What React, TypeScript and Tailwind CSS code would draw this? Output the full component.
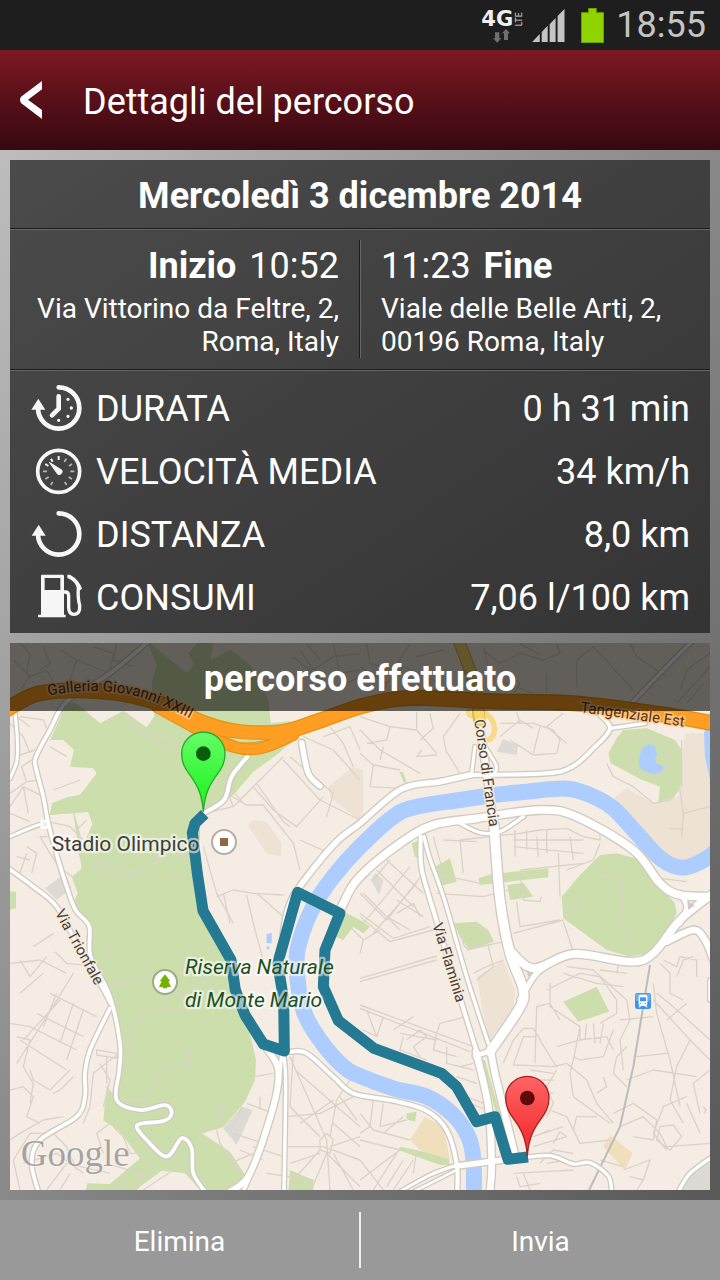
import type { ReactNode } from 'react';

type Road = { w: number; pts: number[] };

// Catmull-Rom curve through a flat list of x, y pairs
const smooth = (p: number[]) => {
  const n = p.length / 2;
  const at = (i: number) => {
    const k = Math.max(0, Math.min(n - 1, i));
    return [p[k * 2], p[k * 2 + 1]];
  };
  let d = `M${p[0]} ${p[1]}`;
  for (let i = 0; i < n - 1; i++) {
    const [a, b, c, e] = [at(i - 1), at(i), at(i + 1), at(i + 2)];
    d += `C${b[0] + (c[0] - a[0]) / 6} ${b[1] + (c[1] - a[1]) / 6} ${c[0] - (e[0] - b[0]) / 6} ${c[1] - (e[1] - b[1]) / 6} ${c[0]} ${c[1]}`;
  }
  return d;
};

const parks = [
  'M440 0L560 100L582 72L565 40L600 0L640 0L632 62L690 28L750 75L780 130L805 180L812 250L870 243L905 280L870 310L830 345L760 395L700 465L640 510L585 550L585 700L607 815L695 960L712 1070L750 1180L768 1260L765 1320L735 1385L670 1462L605 1480L690 1535L735 1605L700 1660L600 1650L555 1600L485 1592L420 1640L400 1660L255 1660L262 1630L330 1632L420 1555L355 1470L310 1442L320 1335L350 1380L360 1210L330 1070L270 950L275 870L220 790L250 720L215 490L265 670L240 640L278 552L265 515L150 525L157 490L200 472L240 465L280 425L290 400L280 385L210 380L222 330L190 300L150 300L200 190L230 190L300 250L370 212L440 262L462 230L455 130L470 75Z',
  'M215 710L265 670L240 640L278 552L600 560L600 800L270 860Z',
  'M150 525L265 515L280 560L600 600L600 440L290 400L240 465L157 490Z',
  'M1825 340L1850 295L1870 270L1940 265L2025 300L2045 330L2045 430L2020 475L1975 485L1980 440L1915 415L1880 395L1832 370Z',
  'M1685 770L1740 705L1800 645L1850 640L1905 655L1950 690L1985 745L2025 790L2030 820L1990 890L1950 940L1890 950L1820 930L1690 835Z',
  'M1690 1085L1790 1040L1828 1115L1735 1145Z',
  'M1360 850L1430 845L1465 870L1482 905L1410 930L1385 900Z',
  'M1305 680L1350 655L1370 725L1320 738Z',
  'M1435 715L1475 702L1645 685L1645 712L1440 735Z',
  'M1522 735L1570 728L1600 770L1530 780Z',
  'M1040 820L1080 840L1110 860L1090 880L1060 860L1030 900L1005 890Z',
  'M1200 1520L1345 1550L1350 1575L1320 1575L1195 1530Z',
  'M1220 1420L1250 1415L1245 1445L1220 1438Z',
  'M1235 610L1260 600L1260 660L1245 650Z',
  'M1198 395L1208 395L1220 425L1212 428Z',
  'M1445 1260L1455 1260L1505 1440L1495 1445Z',
  'M870 1590L940 1620L940 1660L865 1660Z',
  'M30 755L48 755L48 805L30 810Z',
];

const sands = [
  'M985 440L1060 380L1090 390L1090 550L1040 510L990 470Z',
  'M1835 480L1880 445L1960 490L2035 470L2055 280L2110 280L2130 420L2130 640L2030 670L1950 620Z',
  'M1430 1010L1510 960L1545 1050L1540 1110L1465 1205Z',
  'M745 560Q750 530 800 545L845 610L843 650L800 640Z',
];

const golds = [
  'M1230 1500L1275 1430L1330 1460L1350 1560L1260 1530Z',
  'M1810 1520L1830 1485L1898 1540L1875 1590Z',
];

const greys = [
  'M135 745L195 700L215 745L170 780Z',
  'M670 1465L725 1400L758 1410L710 1515Z',
  'M1490 335L1510 298L1555 315L1550 345Z',
  'M1112 720L1125 700L1150 720L1138 765Z',
  'M2040 1660L2070 1600L2140 1550L2140 1660Z',
];

// small streets, one polyline each
const streets = [
  // north west
  'M40 60L90 110L140 90L170 140M90 110L60 150M180 30L230 60L210 120L270 140M230 60L330 100M280 20L340 40L330 90M60 10L90 40L80 100M350 10L340 60L400 80M130 20L150 70L120 90',
  'M30 250L70 290L90 340M60 230L130 240L150 290M30 460L80 425L115 420M30 500L70 440L130 470M80 425L65 380L110 350M70 440L85 520M30 520L90 545M50 230L90 260M60 345L105 330',
  'M145 545L210 560L250 600M175 640L230 600L240 650M150 590L120 590L150 640L190 700M80 620L110 640L95 700M50 650L90 660M60 700L80 640M190 690L230 720M200 350L150 320M240 420L160 450M260 540L230 570',
  'M480 660L420 700L290 660L285 690L320 700L400 710M440 660L490 645L580 650M380 220L400 265L520 300M440 290L530 340M500 715L560 705M610 390L680 450L700 500',
  'M610 520L700 500L760 440L850 350M680 460L740 495L790 495L880 610L900 690M760 440L820 510L890 560L970 470M770 430L850 545L870 560M850 360L960 480L1080 540M870 350L1000 460L980 530M730 490L705 460M910 290L1000 330L1080 420M970 290L1050 260L1080 330M990 260L1030 310L1060 380',
  'M610 620L650 760L700 850M650 770L700 750L760 760L850 765M670 760L690 850M740 765L760 850L800 1000M770 760L850 830M900 600L990 640',
  // north east
  'M900 30L940 90L1000 50L1080 40M920 10L960 60M1000 10L1020 100L1080 90M880 50L1000 150L1080 110M1100 10L1110 70L1180 90L1230 10M1160 130L1210 80L1320 130M1080 80L1160 130L1150 160M1250 50L1330 30M1450 30L1500 70L1560 40L1630 60L1680 40L1670 10M1560 10L1620 45M1500 90L1560 130L1540 160M1640 100L1640 160M1730 140L1730 60L1780 20L1900 150M1890 10L1910 50L2000 110M2040 150L2060 90L2130 40M2030 190L2130 80M2060 190L2110 130M1450 20L1470 110L1600 160',
  'M1080 270L1140 330L1260 400M1080 230L1170 260L1160 300L1100 310M1170 260L1250 270L1310 340M1140 360L1150 320M1120 375L1200 390M1250 270L1250 215M1310 345L1250 350L1265 330M1340 335L1380 400M1260 300L1300 265L1290 220M1080 340L1120 375L1110 440L1200 445M1380 220L1330 290L1340 340',
  'M1500 250L1600 250L1660 270L1680 300L1670 340L1600 345L1530 300M1500 290L1560 240L1600 265M1560 250L1550 215M1620 260L1600 340M1700 310L1640 260L1690 220',
  'M1820 370L1840 410L1900 440L1960 490L2010 480L2045 440L2045 300M1880 300L1930 285L2000 310L2010 380L1960 415L1890 390ZM2040 450L2050 520L2130 500M2050 520L2045 590M2010 565L2050 568M1980 715L2060 725',
  'M1380 600L1560 580L1620 570L1700 565L1750 590L1800 600L1800 570M1540 600L1750 600M1540 620L1750 640M1545 570L1545 650M1580 570L1580 630M1610 590L1615 650M1640 570L1640 640M1675 640L1680 770M1710 590L1720 660M1560 690L1750 670M1800 610L1780 660L1700 690M1300 700L1440 730M1300 590L1330 700M1380 600L1390 700M1330 600L1430 605M1310 760L1450 770L1560 740M1560 700L1570 780L1620 785L1625 770',
  'M1830 715L1800 710L1870 690L1870 710L1860 830L1890 930',
  'M1080 760L1160 840L1270 700M1090 850L1230 680M1120 880L1250 730M1130 690L1240 800M1160 660L1270 760M1090 760L1200 870M1120 720L1170 660M1050 860L1090 900L1140 870M1190 780L1270 830M1080 730L1110 700',
  // south west
  'M30 970L120 960L200 1000M60 960L90 1010L140 950M100 920L160 880M165 935L200 970L300 980M60 1060L130 1000M50 1270L140 1130L220 1000M70 1200L180 1080M150 1060L290 1130M110 1120L250 1190M90 1160L230 1230M60 1200L200 1290M170 1060L130 1160M220 1090L180 1210M250 1110L200 1260M90 1290L100 1320L150 1350L210 1290M50 1190L90 1200L70 1280L100 1330L90 1390M30 1350L70 1340L100 1370L80 1430L120 1450M30 1150L90 1160',
  'M290 1245L350 1255L350 1240L290 1230ZM320 1250L320 1330M350 1245L280 1300L270 1400L250 1450M220 1310L180 1350L160 1360M300 1270L330 1320L310 1400M30 1500L60 1480L130 1440L190 1430M40 1560L90 1480L160 1480L200 1520L230 1590M60 1650L40 1560M70 1570L170 1540L250 1600M140 1650L200 1570L330 1600M180 1650L210 1600M330 1450L290 1480L310 1540M340 1460L370 1490L390 1540L450 1540L450 1590L400 1610M320 1570L420 1600L430 1620M360 1650L370 1600L390 1650M430 1650L520 1590L560 1560',
  'M330 1035L450 1010L440 960M400 1150L380 1165L400 1220L395 1260L370 1270M400 1150L450 1120L560 1100M350 1380L435 1380L450 1330L510 1270L568 1275L565 1230M530 1045L545 1080L620 1010M620 1010L640 1050M310 920L330 935L320 960M650 1450L660 1390L670 1430M650 1470L660 1510L720 1600M610 1480L650 1450',
  'M760 1310L820 1300M780 1370L780 1410M740 1390L820 1420M700 1480L790 1510M725 1400L700 1460M720 1530L790 1560M690 1570L760 1540M800 1600L940 1620M760 1520L850 1550',
  'M870 1250L980 1500L990 1650M885 1290L1080 1460M880 1240L870 1400L960 1490M860 1430L960 1420L1080 1360M860 1520L970 1520L1080 1560M870 1570L960 1540M990 1520L1080 1490M990 1490L1010 1380L1050 1320M930 1660L980 1540L1080 1640M1000 1540L1060 1650M900 1450L1000 1380M880 1620L960 1530M1000 1450L1080 1520M1020 1370L1070 1440',
  'M960 1500L980 1480L1000 1500L990 1540L960 1530Z',
  // south centre
  'M1080 1420L1120 1470L1230 1500M1120 1380L1110 1460L1080 1480M1150 1390L1140 1460L1220 1440M1080 1500L1200 1530L1080 1620M1190 1540L1120 1650M1080 1560L1150 1650M1210 1560L1160 1640M1240 1560L1180 1650M1150 1480L1210 1430M1250 1530L1240 1600',
  'M1080 1095L1420 1220M1080 1105L1410 1235M1100 1110L1130 1190M1150 1130L1130 1190L1090 1170M1220 1200L1260 1170L1280 1190L1240 1220L1260 1250M1210 1190L1200 1230L1280 1260M1310 1180L1320 1150L1400 1130M1310 1180L1300 1230L1370 1250M1340 1220L1340 1270L1420 1290M1200 1180L1310 1200M1380 1280L1420 1270M1370 1310L1430 1330M1400 1370L1450 1390M1410 1390L1460 1410M1240 1130L1180 1170',
  'M1080 1025L1310 960M1080 1015L1310 948M1080 820L1180 895L1290 860M1080 830L1170 905L1300 870M1160 830L1230 870M1190 820L1240 790L1260 830M1090 900L1080 940M1400 870Q1420 840 1450 870T1430 920T1390 880M1420 1000L1460 980L1510 960M1430 1020L1480 980L1460 900M1400 930L1510 905M1540 880L1690 840M1690 845L1720 935M1550 785L1560 860L1680 840M1750 780L1690 830M1420 1060L1430 1120',
  // south east
  'M1510 1270L1540 1200L1570 1165L1600 1165L1650 1250L1670 1280L1540 1275L1570 1190L1610 1190M1605 1270L1610 1100L1650 1090L1680 1140M1650 1030L1650 1100L1740 1160L1720 1260L1710 1300M1640 1050L1740 1000L1800 1010L1850 1080L1850 1120L1800 1150M1690 1000L1790 1030L1870 1040M1740 1160L1740 1200L1670 1220M1760 1150L1755 1200M1780 1150L1785 1210M1810 1150L1800 1210M1740 1200L1820 1190L1840 1230M1840 1170L1810 1250L1740 1260L1720 1250',
  'M1660 1280L1700 1270L1760 1320L1790 1390L1840 1450M1710 1300L1720 1370L1830 1450M1670 1290L1640 1340L1660 1390L1640 1430M1590 1290L1660 1300M1550 1310L1570 1430L1590 1490M1660 1320L1600 1320M1790 1360L1820 1340L1810 1310M1600 1340L1660 1360M1650 1410L1700 1430L1740 1510L1830 1500M1650 1470L1600 1490L1690 1460M1720 1470L1730 1430L1790 1430M1660 1510L1680 1475L1700 1490',
  'M1700 980L1780 990L1880 1080L1890 1140L1860 1200L1870 1290M1960 1030L1970 1120L2010 1260L2040 1400M1970 1060L2020 1100L2130 1200M1960 1080L2080 1210L2130 1260M1980 970L2010 1000L2010 1060L2050 1080M1990 960L2030 980L2040 950L2090 960L2090 1010M2030 1010L2050 960L2080 950M2000 1140L2060 1090M1860 1140L1960 1130M1910 1250L2000 1240M1880 1320L1960 1290L2090 1310M2070 1200L2030 1280L2010 1380L2050 1450M2130 1290L2080 1330L2100 1420M2110 1400L2118 1410L2112 1420',
  'M1860 1460L1930 1430L1980 1480L2000 1520L2130 1510M1840 1420L1900 1390L1970 1440L1960 1500L1900 1490M1980 1460L2020 1455L2045 1490L2010 1530L1970 1500ZM1870 1590L1950 1560L1930 1620L1890 1610M1930 1620L1910 1650M1800 1560L1870 1580M1540 1600L1720 1590M1570 1600L1590 1650M1550 1610L1560 1640L1620 1630M1620 1570L1660 1530L1720 1540M1600 1520L1700 1490M1640 1570L1700 1560M1800 990L1880 1000M1850 1000L1860 960',
  'M1880 1220L1850 1250L1840 1300L1880 1340M2000 1530L1960 1480L1990 1400L2060 1370M2060 1390L2100 1480',
];

const roads: Road[] = [
  { w: 9, pts: [45, 215, 52, 300, 50, 365, 30, 415] },
  { w: 9, pts: [30, 590, 80, 568, 130, 550] },
  { w: 11, pts: [445, 5, 330, 100, 200, 185, 150, 270, 108, 350, 108, 385, 130, 470, 145, 550, 175, 660, 210, 770, 230, 815, 268, 860, 272, 950, 330, 1070, 360, 1210, 358, 1290, 350, 1380, 420, 1410, 495, 1395, 515, 1420, 490, 1443, 412, 1455, 440, 1500, 500, 1550, 545, 1495, 575, 1525, 580, 1600, 615, 1655] },
  { w: 11, pts: [25, 685, 100, 740, 170, 800, 230, 910, 300, 1030, 332, 1090] },
  { w: 11, pts: [330, 1105, 270, 1230, 255, 1300, 255, 1370, 230, 1430, 120, 1500, 95, 1570, 115, 1655] },
  { w: 12, pts: [742, 350, 695, 410, 672, 480, 610, 520] },
  { w: 16, pts: [905, 308, 925, 400, 960, 438] },
  { w: 12, pts: [870, 1235, 920, 1240, 1000, 1310, 1060, 1360, 1180, 1382, 1280, 1412, 1340, 1470, 1370, 1570, 1372, 1655] },
  { w: 10, pts: [850, 1240, 857, 1330, 852, 1655] },
  { w: 18, pts: [800, 1225, 835, 1290, 820, 1400, 750, 1600, 690, 1655] },
  { w: 10, pts: [845, 1240, 832, 1350, 790, 1510, 730, 1655] },
  { w: 17, pts: [850, 880, 880, 770, 1000, 615, 1080, 550, 1205, 447, 1320, 425, 1410, 405] },
  { w: 12, pts: [1410, 405, 1640, 400, 1720, 378, 1780, 325, 1830, 265, 1790, 215] },
  { w: 10, pts: [1830, 265, 1880, 258, 1935, 250] },
  { w: 10, pts: [2075, 5, 1990, 90, 1890, 195] },
  { w: 23, pts: [980, 920, 1030, 790, 1080, 710, 1200, 610, 1300, 555, 1430, 535, 1620, 510, 1730, 530, 1900, 630, 1980, 730, 2040, 765, 2140, 770] },
  { w: 10, pts: [1380, 550, 1440, 578, 1500, 575, 1570, 530] },
  { w: 9, pts: [1425, 320, 1415, 400] },
  { w: 9, pts: [1455, 320, 1488, 375, 1485, 400] },
  { w: 20, pts: [1437, 240, 1460, 400, 1483, 560] },
  { w: 28, pts: [1482, 555, 1500, 780, 1530, 940, 1570, 1050, 1555, 1110, 1470, 1235] },
  { w: 23, pts: [1530, 930, 1600, 985, 1720, 942, 1890, 965, 1960, 940, 2040, 840, 2140, 760] },
  { w: 16, pts: [1560, 1080, 1610, 1000, 1680, 955] },
  { w: 20, pts: [2000, 905, 2080, 870, 2115, 900, 2140, 960] },
  { w: 14, pts: [2040, 850, 2060, 800, 2040, 760] },
  { w: 10, pts: [2130, 1020, 2130, 1080] },
  { w: 12, pts: [1262, 590, 1264, 680, 1292, 785, 1430, 1235] },
  { w: 10, pts: [1272, 590, 1288, 650, 1335, 785, 1400, 1010, 1465, 1210] },
  { w: 20, pts: [1428, 1235, 1465, 1400, 1475, 1570, 1470, 1655] },
  { w: 20, pts: [1472, 1225, 1485, 1300, 1545, 1545] },
  { w: 14, pts: [1425, 1248, 1475, 1232] },
  { w: 17, pts: [1370, 1578, 1470, 1565, 1550, 1555] },
  { w: 10, pts: [1550, 1555, 1650, 1547, 1720, 1572, 1770, 1568, 1825, 1608, 1835, 1655] },
  { w: 9, pts: [1200, 1655, 1290, 1605, 1370, 1575] },
  { w: 7, pts: [1240, 1655, 1370, 1590] },
  { w: 10, pts: [2140, 1548, 2070, 1600, 2035, 1655] },
];

const river = [
  2160, 620, 2120, 655, 2050, 683, 1985, 658, 1910, 580, 1840, 505, 1770, 465, 1700, 446, 1580, 455, 1480, 465, 1380, 480,
  1250, 500, 1180, 530, 1080, 620, 1000, 710, 940, 800, 900, 900, 890, 980, 910, 1110, 960, 1200, 1030, 1280, 1080, 1308,
  1180, 1345, 1280, 1370, 1360, 1425, 1405, 1490, 1420, 1555, 1422, 1660,
];

const motorway = [20, 208, 100, 165, 180, 152, 300, 154, 400, 168, 500, 198, 600, 245, 690, 272, 780, 280, 860, 274, 950, 245, 1080, 200, 1180, 178, 1280, 174, 1480, 184, 1720, 190, 1980, 222, 2140, 250];
const motorwayRamp = [470, 200, 560, 250, 640, 295, 700, 320, 750, 328, 800, 320, 880, 285];

const route = 'M614 522L585 550L577 578L592 700L609 812L693 960L706 1050L735 1125L790 1212L853 1233L851 1080L833 970L893 757L1020 820L975 930L970 1040L1015 1142L1122 1225L1325 1300L1370 1340L1430 1445L1485 1430L1524 1558L1584 1551';

const halo = { paintOrder: 'stroke', strokeLinejoin: 'round' } as const;

const Pin = ({ x, y, id, top, bottom, edge, dot }: { x: number; y: number; id: string; top: string; bottom: string; edge: string; dot: string }) => (
  <g transform={`translate(${x} ${y})`}>
    <defs>
      <linearGradient id={id} x1="0" y1="0" x2="0" y2="1">
        <stop offset="0" stopColor={top} />
        <stop offset="0.75" stopColor={bottom} />
      </linearGradient>
    </defs>
    <path d="M0 -2C-8 -110 -65 -110 -65 -175A65 65 0 0 1 65 -175C65 -110 8 -110 0 -2Z" fill={`url(#${id})`} stroke={edge} strokeWidth="4" strokeLinejoin="round" />
    <circle cy="-175" r="22" fill={dot} />
  </g>
);

const RouteMap = () => (
  <svg viewBox="30 9 2100 1641" className="block h-auto w-full font-[Roboto,sans-serif]" role="img" aria-label="Mappa del percorso">
    <rect x="30" y="9" width="2100" height="1641" fill="#f5ede4" />
    <g fill="#eee2d5">{sands.map((d) => <path key={d} d={d} />)}</g>
    <g fill="#cddead">{parks.map((d) => <path key={d} d={d} />)}</g>
    <g fill="#f0dfbc">{golds.map((d) => <path key={d} d={d} />)}</g>
    <g fill="#dddad5">{greys.map((d) => <path key={d} d={d} />)}</g>
    <g fill="#aecdff">
      <path d="M1925 325L1945 312L1965 318L1972 345L1965 355L1970 370L1990 378L1985 400L1960 402L1940 395L1920 385L1915 365Z" />
      <path d="M2112 280L2130 215L2130 420L2115 350Z" />
      <path d="M800 882L815 878L815 910L800 910ZM800 920L808 918L808 928L800 928Z" />
    </g>
    <g fill="none" stroke="#dbd3c8" strokeWidth="4" strokeLinejoin="round">
      {streets.map((d) => <path key={d} d={d} />)}
    </g>
    <path d={smooth(river)} fill="none" stroke="#aecdff" strokeWidth="48" />
    <path d="M1950 975L1900 1280L1860 1460L1765 1655" fill="none" stroke="#bdbbbb" strokeWidth="6" />
    <g fill="none" strokeLinecap="round" strokeLinejoin="round">
      <g stroke="#d2cac0">{roads.map((r) => <path key={r.pts.join()} d={smooth(r.pts)} strokeWidth={r.w + 8} />)}</g>
      <g stroke="#fff">{roads.map((r) => <path key={r.pts.join()} d={smooth(r.pts)} strokeWidth={r.w} />)}</g>
      <rect x="125" y="543" width="20" height="20" fill="#f5ede4" stroke="#fff" strokeWidth="7" />
      <path d="M1578 990L1600 1000L1585 1010ZM2062 785L2085 795L2065 810Z" fill="#d2cac0" />
      <path d="M1405 215Q1405 230 1430 228M1450 215Q1490 240 1482 280Q1475 305 1450 300" stroke="#f8d98a" strokeWidth="16" />
      <path d="M1372 -10L1425 130L1438 240" stroke="#e0b347" strokeWidth="38" />
      <path d="M1372 -10L1425 130L1440 240" stroke="#fbd86b" strokeWidth="30" />
      <g stroke="#e8930f">
        <path d={smooth(motorwayRamp)} strokeWidth="36" />
        <path d={smooth(motorway)} strokeWidth="48" />
      </g>
      <g stroke="#ff9e22">
        <path d={smooth(motorwayRamp)} strokeWidth="29" />
        <path d={smooth(motorway)} strokeWidth="40" />
      </g>
      <path d="M672 290Q740 300 810 298Q760 312 720 308Z" fill="#cddead" stroke="#e8930f" strokeWidth="3" />
    </g>
    <path d={route} fill="none" stroke="#247a93" strokeWidth="33" strokeLinejoin="round" />

    <path id="galleria" d="M145 167Q310 135 440 178Q510 202 600 252" fill="none" />
    <g stroke="#f6ecdf" strokeOpacity="0.75" strokeWidth="10" fill="#4a4038" fontSize="45" style={halo}>
      <text fill="#5b3410" stroke="#ffcf94">
        <textPath href="#galleria">Galleria Giovanni XXIII</textPath>
      </text>
      <text transform="translate(1740 216) rotate(8)" fill="#5b3410" stroke="#ffcf94">Tangenziale Est</text>
      <text transform="translate(1423 240) rotate(82)">Corso di Francia</text>
      <text transform="translate(1297 854) rotate(73)">Via Flaminia</text>
      <text transform="translate(164 818) rotate(61)">Via Trionfale</text>
    </g>
    <g stroke="#fff" strokeOpacity="0.55" strokeWidth="14" style={halo}>
      <text x="155" y="632" fontSize="63" fill="#443c3c">Stadio Olimpico</text>
      <g fontSize="63" fontStyle="italic" fill="#1f4f1f">
        <text x="555" y="1003">Riserva Naturale</text>
        <text x="555" y="1102">di Monte Mario</text>
      </g>
    </g>

    <g fill="#fff" stroke="#b5aea8" strokeWidth="6">
      <circle cx="672" cy="606" r="36" />
      <circle cx="495" cy="1026" r="36" stroke="#9bab82" />
    </g>
    <rect x="660" y="594" width="24" height="24" fill="#8f6745" />
    <path d="M495 1003L511 1024H505L513 1041H501V1045H489V1041H477L485 1024H479Z" fill="#72b100" />
    <g transform="translate(1905 1059)">
      <rect width="48" height="48" rx="7" fill="#3f95e8" />
      <rect x="2" y="2" width="44" height="22" rx="6" fill="#6bb2f3" />
      <path d="M17 5H31Q37 5 37 11V33Q37 36 34 37L38 43H33L30 39H18L15 43H10L14 37Q11 36 11 33V11Q11 5 17 5Z" fill="#fff" />
      <rect x="15" y="13" width="18" height="12" rx="2" fill="#3f95e8" />
      <circle cx="17" cy="31" r="2" fill="#3f95e8" />
      <circle cx="31" cy="31" r="2" fill="#3f95e8" />
    </g>

    <Pin x={610} y={516} id="pin-start" top="#66fc68" bottom="#2cf52c" edge="#26ac2c" dot="#0b5c10" />
    <Pin x={1582} y={1549} id="pin-end" top="#ff6466" bottom="#f53434" edge="#a82024" dot="#5e0a0c" />

    <text x="62" y="1579" fontSize="111" fontFamily="Liberation Serif, serif" fill="#8e8a86" fillOpacity="0.75" stroke="#fff" strokeOpacity="0.4" strokeWidth="6" style={halo}>
      Google
    </text>
  </svg>
);

const StatIcon = ({ children }: { children: ReactNode }) => (
  <svg viewBox="-86 -72 156 144" className="h-12 w-[52px] shrink-0" fill="none" stroke="#f7f7f7" aria-hidden="true">
    {children}
  </svg>
);

const stats = [
  {
    label: 'DURATA',
    value: '0 h 31 min',
    icon: (
      <StatIcon>
        <path d="M0 -65A62 62 0 1 1 -62 -3" strokeWidth="14" strokeLinecap="round" />
        <path d="M-82 2L-61 -31L-40 2Z" fill="#f7f7f7" stroke="none" />
        <path d="M0 -38V-1L-20 19" strokeWidth="14" strokeLinecap="round" strokeLinejoin="round" />
        <path d="M28 -29v0M38 -3v0M28 22v0M0 34v0" strokeWidth="10" strokeLinecap="round" />
      </StatIcon>
    ),
  },
  {
    label: 'VELOCITÀ MEDIA',
    value: '34 km/h',
    icon: (
      <StatIcon>
        <circle cy="-2" r="63" strokeWidth="11" />
        <path d="M0 -48V-36M-23 -40L-18 -31M-40 -24L-31 -18" strokeWidth="6" />
        <path d="M-47 -2H-35M-40 21L-30 15M-24 39L-18 30M23 -40L17 -30M40 -24L31 -18M47 -2H35M40 21L30 15M24 39L18 30" stroke="#b5b5b5" strokeWidth="5" />
        <path d="M-28 -29L10 -5Q12 7 0 8Q-5 6 -7 1Z" fill="#f7f7f7" stroke="#f7f7f7" strokeWidth="3" />
      </StatIcon>
    ),
  },
  {
    label: 'DISTANZA',
    value: '8,0 km',
    icon: (
      <StatIcon>
        <path d="M0 -65A62 62 0 1 1 -62 -3" strokeWidth="14" strokeLinecap="round" />
        <path d="M-81 2L-60 -31L-39 2Z" fill="#f7f7f7" stroke="none" />
      </StatIcon>
    ),
  },
  {
    label: 'CONSUMI',
    value: '7,06 l/100 km',
    icon: (
      <StatIcon>
        <path d="M-53 -66Q-53 -70 -49 -70H12Q16 -70 16 -66V50H21V58H-62V50H-53ZM-42 -60V-24H5V-60Z" fill="#f7f7f7" fillRule="evenodd" stroke="none" />
        <path d="M16 -18H20Q30 -18 30 -6V28Q30 49 46 49Q65 49 63 22Q57 2 59 -32" strokeWidth="10" />
        <path d="M26 -70L34 -70Q62 -54 70 -28L62 -22L54 -32Q50 -50 26 -60Z" fill="#f7f7f7" stroke="none" />
      </StatIcon>
    ),
  },
];

const StatusBar = () => (
  <div className="flex h-[50px] items-center justify-end bg-[#1e1e1e] pr-[14px]">
    <svg viewBox="0 0 138 105" className="h-[35px] w-[46px]" aria-hidden="true">
      <text x="-2" y="54" fontSize="63" fontWeight="700" fontFamily="DejaVu Sans, sans-serif" fill="#eee">4G</text>
      <text transform="translate(121 55) rotate(-90)" fontSize="27" fontFamily="Roboto, sans-serif" fill="#ddd">LTE</text>
      <path d="M39 73H52V91H58L46 104L33 91H39ZM66 96H78V76H84L72 63L60 76H66Z" fill="#6e6e6e" />
    </svg>
    <svg viewBox="226 29 99 100" className="ml-1 h-[33px] w-[33px]" fill="#c4c4c4" aria-hidden="true">
      <path d="M226 129L249 105V129ZM255 99L273 80V129H255ZM279 75L297 56V129H279ZM303 50L324 29V129H303Z" />
    </svg>
    <svg viewBox="372 24 69 105" className="ml-4 h-[35px] w-[23px]" aria-hidden="true">
      <path d="M373 38H395V25H418V38H440V128H373Z" fill="#8fd400" stroke="#6ba300" strokeWidth="3" />
    </svg>
    <span className="ml-3 text-[36px] leading-[48px] text-[#c4c4c4]">18:55</span>
  </div>
);

const rule = 'border-b border-[#1c1c1c] shadow-[0_1px_0_#666]';

export default function App() {
  return (
    <div className="flex min-h-screen flex-col bg-[#999] font-[Roboto,sans-serif] text-white">
      <StatusBar />
      <header className="flex h-[100px] items-center bg-linear-to-b from-[#7c1823] to-[#37080f]">
        <button type="button" aria-label="Indietro" className="flex h-full w-[83px] items-center pl-5">
          <svg viewBox="0 0 66 114" className="h-[38px] w-[22px]" fill="#fff">
            <path d="M66 0V25L24 56L66 87V114L3 66Q-3 56 3 47Z" />
          </svg>
        </button>
        <h1 className="pt-1 text-[36px] leading-[48px]">Dettagli del percorso</h1>
      </header>

      <main className="flex flex-1 flex-col gap-[10px] bg-linear-to-br from-[#bdbdbd] to-[#585858] p-[10px]">
        <section className="bg-linear-to-br from-[#4b4b4b] to-[#343434]">
          <h2 className={`pt-3 pb-2 text-center text-[36px] leading-[48px] font-bold ${rule}`}>Mercoledì 3 dicembre 2014</h2>
          <div className={`grid grid-cols-2 py-[11px] ${rule}`}>
            <div className="border-r border-[#1c1c1c] pt-[6px] pr-5 pl-5 text-right">
              <p className="text-[36px] leading-[40px]"><b>Inizio</b> <span className="ml-1">10:52</span></p>
              <p className="mt-[6px] text-[28px] leading-[33px]">Via Vittorino da Feltre, 2,<br />Roma, Italy</p>
            </div>
            <div className="border-l border-[#666] pt-[6px] pr-5 pl-5">
              <p className="text-[36px] leading-[40px]"><span className="mr-1">11:23</span> <b>Fine</b></p>
              <p className="mt-[6px] text-[28px] leading-[33px]">Viale delle Belle Arti, 2,<br />00196 Roma, Italy</p>
            </div>
          </div>
          <dl className="pt-[7px] pr-5 pb-1 pl-5">
            {stats.map((s) => (
              <div key={s.label} className="flex h-[63px] items-center text-[36px] leading-[48px]">
                {s.icon}
                <dt className="ml-[14px] flex-1">{s.label}</dt>
                <dd>{s.value}</dd>
              </div>
            ))}
          </dl>
        </section>

        <section className="relative">
          <RouteMap />
          <h2 className="absolute inset-x-0 top-0 bg-black/60 pt-3 pb-2 text-center text-[36px] leading-[48px] font-bold">percorso effettuato</h2>
        </section>
      </main>

      <footer className="flex h-20 items-center bg-[#999] text-[28px]">
        <button type="button" className="h-14 flex-1 pt-1">Elimina</button>
        <button type="button" className="h-14 flex-1 border-l-2 border-[#eee] pt-1">Invia</button>
      </footer>
    </div>
  );
}
